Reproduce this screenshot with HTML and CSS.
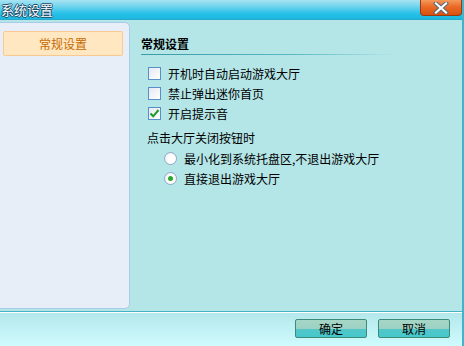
FILE: index.html
```html
<!DOCTYPE html>
<html lang="zh">
<head>
  <meta charset="UTF-8">
  <title>系统设置</title>
  <link rel="stylesheet" href="styles.css">
</head>
<body>
  <div class="window">
    <div class="titlebar">
      <span class="title">系统设置</span>
      <button class="close-btn">
        <svg width="18" height="12" viewBox="0 0 18 12">
          <path d="M4 1.5 L14 10.5 M14 1.5 L4 10.5" stroke="#5a6a78" stroke-width="4.2" stroke-linecap="square"/>
          <path d="M4 1.5 L14 10.5 M14 1.5 L4 10.5" stroke="#ffffff" stroke-width="2.2" stroke-linecap="square"/>
        </svg>
      </button>
    </div>

    <div class="main">
      <div class="sidebar">
        <div class="nav-item active">常规设置</div>
      </div>

      <div class="content">
        <div class="section-title">常规设置</div>
        <div class="options">
          <label class="option"><span class="checkbox"></span>开机时自动启动游戏大厅</label>
          <label class="option"><span class="checkbox"></span>禁止弹出迷你首页</label>
          <label class="option">
            <span class="checkbox checked">
              <svg width="11" height="11" viewBox="0 0 11 11"><path d="M1.5 5.5 L4.2 8.3 L9.5 2" fill="none" stroke="#1f9a2a" stroke-width="2"/></svg>
            </span>开启提示音
          </label>
        </div>
        <div class="group-label">点击大厅关闭按钮时</div>
        <div class="radios">
          <label class="option"><span class="radio"></span>最小化到系统托盘区,不退出游戏大厅</label>
          <label class="option"><span class="radio checked"></span>直接退出游戏大厅</label>
        </div>
      </div>
    </div>

    <div class="footer">
      <button class="btn">确定</button>
      <button class="btn">取消</button>
    </div>
  </div>
</body>
</html>
```

FILE: styles.css
```css
body {
  margin: 0;
  font-family: "Noto Sans CJK SC", "Noto Sans", sans-serif;
  font-size: 12px;
  color: #000;
}
.window {
  width: 464px;
  height: 346px;
  display: flex;
  flex-direction: column;
  background: #b4e5e7;
  border-right: 2px solid #3fb4cc;
  box-sizing: border-box;
  overflow: hidden;
}
.titlebar {
  height: 20px;
  flex: none;
  display: flex;
  align-items: flex-start;
  justify-content: space-between;
  background: linear-gradient(#a8e4f2 0%, #6fd3ee 35%, #28c2e8 70%, #1cb8e0 100%);
  border-bottom: 1px solid #2aa8cc;
  box-sizing: border-box;
}
.title {
  margin-left: 1px;
  line-height: 19px;
  font-size: 13px;
  color: #fff;
  text-shadow: 1px 0 #1a4a68, -1px 0 #1a4a68, 0 1px #1a4a68, 0 -1px #1a4a68;
}
.close-btn {
  width: 42px;
  height: 16px;
  margin-right: 0;
  padding: 0;
  border: 1px solid #9a3a10;
  border-top: none;
  border-radius: 0 0 4px 4px;
  background: linear-gradient(#f49a5c 0%, #ea6a26 45%, #d9520e 100%);
  display: flex;
  align-items: center;
  justify-content: center;
}
.main {
  flex: 1;
  display: flex;
  border-bottom: 1px solid #46b2c6;
  box-shadow: 0 1px 0 #fff;
}
.sidebar {
  width: 131px;
  height: 287px;
  margin: 2px 0 0 -1px;
  background: #e8eef7;
  border: 1px solid #a9cbe9;
  border-radius: 0 5px 5px 0;
  box-sizing: border-box;
  padding: 8px 6px 0 3px;
}
.nav-item {
  height: 25px;
  line-height: 23px;
  text-align: center;
  box-sizing: border-box;
}
.nav-item.active {
  background: #ffe7c2;
  border: 1px solid #f9c98f;
  border-radius: 2px;
  color: #c86a00;
}
.content {
  flex: 1;
  padding: 16px 0 0 11px;
}
.section-title {
  width: 252px;
  font-weight: bold;
  line-height: 16px;
  padding-bottom: 2px;
  border-bottom: 1px solid;
  border-image: linear-gradient(to right, #3a9aa8, #5ab8c4 60%, rgba(180, 229, 231, 0)) 1;
}
.options {
  margin: 8px 0 0 7px;
}
.option {
  display: flex;
  align-items: center;
  height: 20px;
}
.checkbox {
  width: 11px;
  height: 11px;
  margin-right: 7px;
  border: 1px solid #5a8ec8;
  background: linear-gradient(135deg, #e4e8f0, #ffffff);
  display: flex;
  align-items: center;
  justify-content: center;
}
.group-label {
  margin: 5px 0 0 6px;
  line-height: 20px;
}
.radios {
  margin-left: 23px;
}
.radio {
  width: 11px;
  height: 11px;
  margin-right: 7px;
  border: 1px solid #94a8c4;
  border-radius: 50%;
  background: radial-gradient(circle at 60% 60%, #ffffff 40%, #dde4ee 100%);
  position: relative;
}
.radio.checked::after {
  content: "";
  position: absolute;
  left: 3px;
  top: 3px;
  width: 5px;
  height: 5px;
  border-radius: 50%;
  background: #2aa82a;
}
.footer {
  height: 33px;
  flex: none;
  margin-top: 1px;
  display: flex;
  justify-content: flex-end;
  align-items: flex-start;
  padding: 6px 12px 0 0;
  box-sizing: border-box;
  background: linear-gradient(#b4e8ec, #cffbfd);
}
.btn {
  width: 72px;
  height: 19px;
  margin-left: 11px;
  padding: 0;
  font-family: inherit;
  font-size: 12px;
  color: #000;
  border: 1px solid #3e8a78;
  border-radius: 2px;
  background: linear-gradient(#a6d6c6 0%, #9cd2c4 50%, #52c6c8 55%, #46c8cc 100%);
}
```
